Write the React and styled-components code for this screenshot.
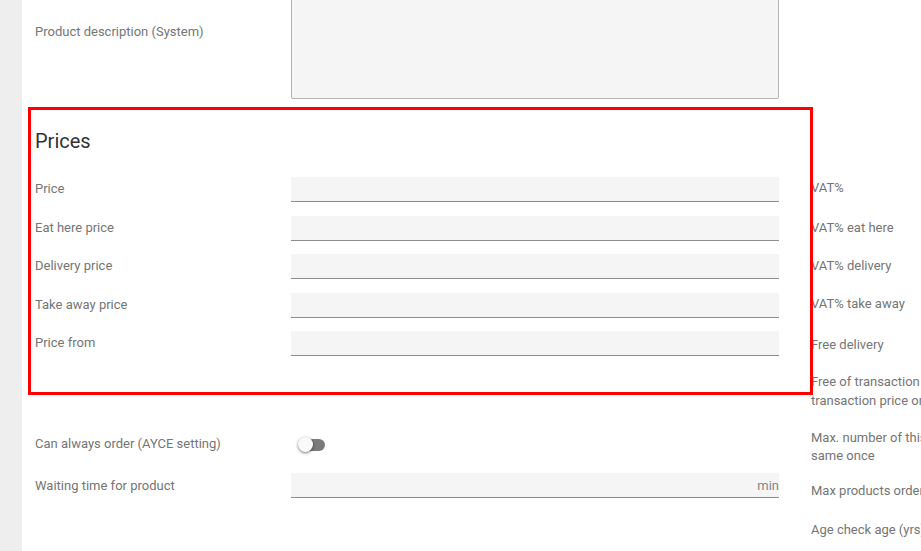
import React from 'react'
import styled, { createGlobalStyle } from 'styled-components'

const Global = createGlobalStyle`
  html, body {
    margin: 0;
    padding: 0;
    overflow: hidden;
    background: #fff;
  }
  body {
    font-family: Roboto, "Liberation Sans", Arial, sans-serif;
  }
`

const Page = styled.div`
  position: relative;
  display: flex;
  width: 921px;
  height: 551px;
  overflow: hidden;
`

const Side = styled.div`
  width: 22px;
  flex: none;
  background: #eeeeee;
`

const Content = styled.div`
  display: flex;
  flex: none;
  padding-left: 13px;
`

const LeftCol = styled.div`
  width: 744px;
  flex: none;
  display: flex;
  flex-direction: column;
  margin-top: -10px;
`

const RightCol = styled.div`
  margin-left: 32px;
  width: 220px;
  flex: none;
  display: flex;
  flex-direction: column;
  padding-top: 180px;
`

const Row = styled.div`
  display: grid;
  grid-template-columns: 256px 488px;
  align-items: center;
  margin-top: ${p => p.$mt || 0}px;
`

const DescRow = styled(Row)`
  align-items: start;
`

const Label = styled.div`
  font-size: 13px;
  line-height: 15px;
  color: #757575;
  padding-top: ${p => p.$pt || 0}px;
  padding-bottom: ${p => p.$pb || 0}px;
`

const TextArea = styled.div`
  height: 107px;
  background: #f5f5f5;
  border: 1px solid #b4b4b4;
  border-radius: 2px;
`

const Heading = styled.h2`
  margin: 30px 0 24px;
  font-size: 20px;
  line-height: 24px;
  font-weight: 400;
  color: #333;
`

const Field = styled.div`
  height: 24px;
  background: #f5f5f5;
  border-bottom: 1px solid #8c8c8c;
  display: flex;
  align-items: center;
  justify-content: flex-end;
`

const Unit = styled.span`
  font-size: 13px;
  color: #858585;
`

const Toggle = styled.div`
  position: relative;
  width: 34px;
  height: 16px;
  margin-left: 7px;
`

const Track = styled.div`
  position: absolute;
  left: 2px;
  top: 2px;
  width: 25px;
  height: 12px;
  border-radius: 6px;
  background: #7a7a7a;
`

const Thumb = styled.div`
  position: absolute;
  left: 0;
  top: 0;
  width: 15px;
  height: 15px;
  border-radius: 50%;
  background: #fafafa;
  box-shadow: 0 1px 3px rgba(0, 0, 0, 0.55);
`

const RightLabel = styled.div`
  font-size: 13px;
  line-height: ${p => p.$lh || 15}px;
  color: #757575;
  white-space: nowrap;
  margin-top: ${p => p.$mt || 0}px;
`

const Highlight = styled.div`
  position: absolute;
  left: 28px;
  top: 107px;
  width: 779px;
  height: 282px;
  border: 3px solid #ff0000;
  pointer-events: none;
`

const prices = ['Price', 'Eat here price', 'Delivery price', 'Take away price', 'Price from']

const App = () => {
  return (
    <>
      <Global />
      <Page>
        <Side />
        <Content>
          <LeftCol>
            <DescRow>
              <Label $pt={34}>Product description (System)</Label>
              <TextArea />
            </DescRow>
            <Heading>Prices</Heading>
            {prices.map((p, i) => (
              <Row key={p} $mt={i === 0 ? 0 : 13.5}>
                <Label $pb={2}>{p}</Label>
                <Field />
              </Row>
            ))}
            <Row $mt={80}>
              <Label $pb={2}>Can always order (AYCE setting)</Label>
              <Toggle>
                <Track />
                <Thumb />
              </Toggle>
            </Row>
            <Row $mt={20}>
              <Label $pb={1}>Waiting time for product</Label>
              <Field>
                <Unit>min</Unit>
              </Field>
            </Row>
          </LeftCol>
          <RightCol>
            <RightLabel>VAT%</RightLabel>
            <RightLabel $mt={25}>VAT% eat here</RightLabel>
            <RightLabel $mt={23}>VAT% delivery</RightLabel>
            <RightLabel $mt={23}>VAT% take away</RightLabel>
            <RightLabel $mt={26}>Free delivery</RightLabel>
            <RightLabel $mt={19.5} $lh={19}>
              Free of transaction
              <br />
              transaction price only
            </RightLabel>
            <RightLabel $mt={19} $lh={18}>
              Max. number of this product
              <br />
              same once
            </RightLabel>
            <RightLabel $mt={18}>Max products ordered</RightLabel>
            <RightLabel $mt={24}>Age check age (yrs)</RightLabel>
          </RightCol>
        </Content>
        <Highlight />
      </Page>
    </>
  )
}

export default App
